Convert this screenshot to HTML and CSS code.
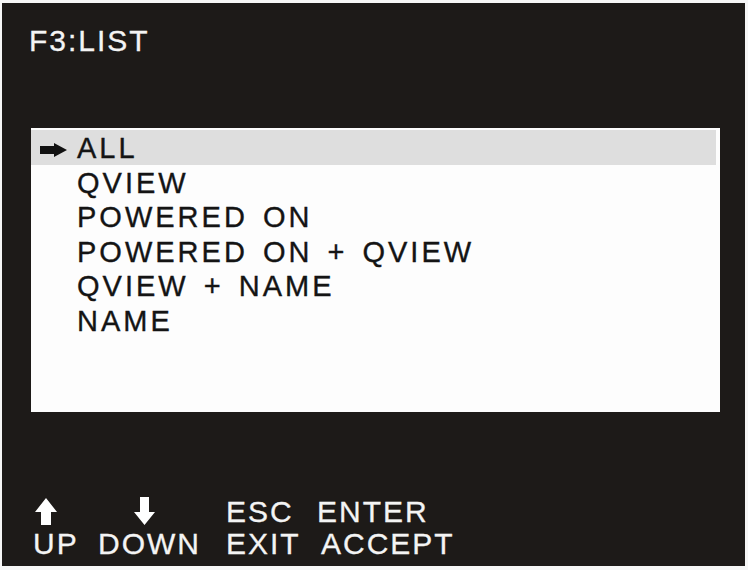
FILE: index.html
```html
<!DOCTYPE html>
<html>
<head>
<meta charset="utf-8">
<link rel="stylesheet" href="styles.css">
</head>
<body>
<div class="screen">
  <div class="title">F3:LIST</div>
  <div class="box">
    <div class="row selected">
      <svg class="ptr" width="27" height="14" viewBox="0 0 27 14"><path d="M0 3H14V0L27 7L14 14V11H0Z" fill="#111"/></svg>
      <span class="label">ALL</span>
    </div>
    <div class="row"><span class="ptr-space"></span><span class="label">QVIEW</span></div>
    <div class="row"><span class="ptr-space"></span><span class="label">POWERED ON</span></div>
    <div class="row"><span class="ptr-space"></span><span class="label">POWERED ON + QVIEW</span></div>
    <div class="row"><span class="ptr-space"></span><span class="label">QVIEW + NAME</span></div>
    <div class="row"><span class="ptr-space"></span><span class="label">NAME</span></div>
  </div>
  <div class="spacer"></div>
  <div class="footer">
    <div class="col c1">
      <div class="key"><svg class="up" width="22" height="27" viewBox="0 0 22 27"><path d="M11 0L22 14H16V27H6V14H0Z" fill="#fff"/></svg></div>
      <div class="act">UP</div>
    </div>
    <div class="col c2">
      <div class="key"><svg class="down" width="21" height="28" viewBox="0 0 21 28"><path d="M6 0H15V15H21L10.5 28L0 15H6Z" fill="#fff"/></svg></div>
      <div class="act">DOWN</div>
    </div>
    <div class="col c3">
      <div class="key">ESC</div>
      <div class="act">EXIT</div>
    </div>
    <div class="col c4">
      <div class="key">ENTER</div>
      <div class="act accept">ACCEPT</div>
    </div>
  </div>
</div>
</body>
</html>
```
FILE: styles.css
```css
html, body {
  margin: 0;
  padding: 0;
  background: #f6f6f6;
}
body {
  width: 748px;
  height: 570px;
  overflow: hidden;
  font-family: "Liberation Sans", Arial, sans-serif;
}
.screen {
  box-sizing: border-box;
  margin: 3px 0 0 2px;
  width: 743px;
  height: 563px;
  background: #1d1a18;
  padding: 20px 0 6px 27px;
  display: flex;
  flex-direction: column;
}
.title {
  color: #f4f4f4;
  font-size: 30px;
  line-height: 36px;
  letter-spacing: 2px;
  -webkit-text-stroke: 0.3px #f4f4f4;
}
.box {
  margin: 69px 0 0 2px;
  width: 689px;
  height: 284px;
  box-sizing: border-box;
  background: #fdfdfd;
  padding-top: 2px;
}
.row {
  height: 34.6px;
  box-sizing: border-box;
  display: flex;
  align-items: flex-start;
  padding-left: 9px;
  color: #141414;
  font-size: 29px;
  letter-spacing: 3px;
  word-spacing: 4px;
  -webkit-text-stroke: 0.35px #141414;
}
.row.selected {
  background: #dedede;
  margin-right: 4px;
}
.ptr {
  display: block;
  margin-top: 13px;
  flex: none;
}
.ptr-space {
  width: 27px;
  flex: none;
}
.label {
  margin-left: 10px;
  padding-top: 2px;
  line-height: 32px;
  white-space: nowrap;
}
.spacer {
  flex: 1;
}
.footer {
  display: flex;
  margin-left: 4px;
  color: #f4f4f4;
  font-size: 30px;
  letter-spacing: 2px;
  -webkit-text-stroke: 0.3px #f4f4f4;
}
.col {
  display: flex;
  flex-direction: column;
}
.c1 { width: 65px; }
.c2 { width: 128px; }
.c3 { width: 91px; }
.key, .act {
  height: 32px;
  line-height: 32px;
  white-space: nowrap;
}
.up {
  display: block;
  margin: 2px 0 0 2px;
}
.down {
  display: block;
  margin: 1px 0 0 36px;
}
.accept {
  padding-left: 4px;
}
```
